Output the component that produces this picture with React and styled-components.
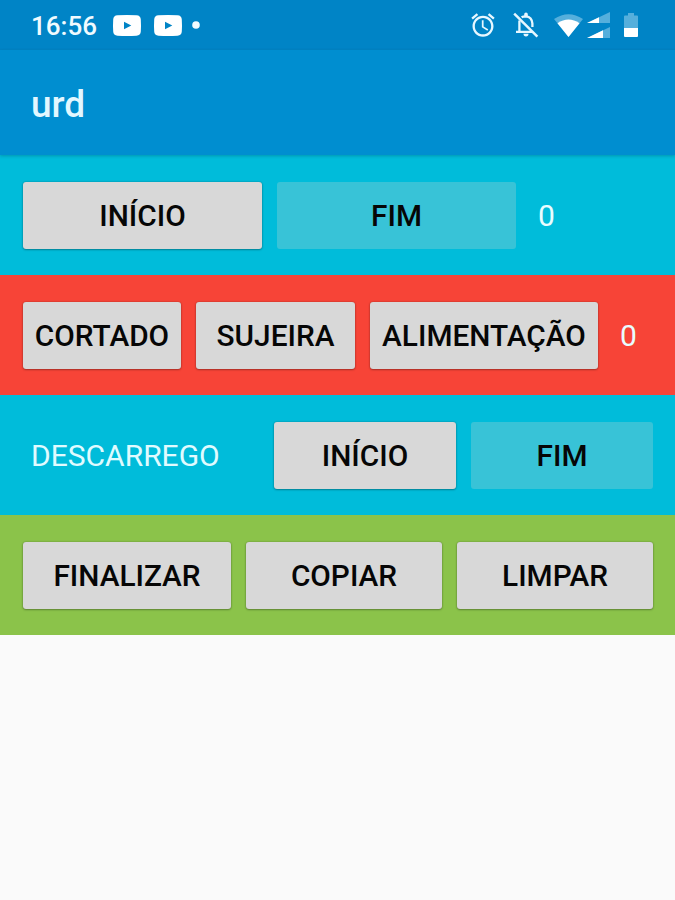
import React from 'react';
import styled, { createGlobalStyle } from 'styled-components';

const GlobalStyles = createGlobalStyle`
    *{
        box-sizing: border-box;
    }
    body{
        margin: 0;
        background-color: #fafafa;
        font-family: Roboto, "Liberation Sans", sans-serif;
    }
`
const Screen = styled.div`
    display: flex;
    flex-direction: column;
    min-height: 100vh;
    background-color: #fafafa;
`
const StatusBar = styled.div`
    height: 50px;
    padding: 0 37px 0 31px;
    display: flex;
    align-items: center;
    background-color: #0084c6;
`
const Clock = styled.span`
    width: 82px;
    padding-top: 1px;
    color: #f0fbff;
    font-size: 26px;
    line-height: 30px;
    font-weight: 500;
`
const StatusIcon = styled.svg`
    display: block;
    flex: none;
    width: ${({width}) => width}px;
    height: ${({height}) => height}px;
    margin-left: ${({$gap}) => $gap || 0}px;
    overflow: visible;
`
const Spacer = styled.div`
    flex: 1;
`
const AppBar = styled.header`
    height: 105px;
    padding: 4px 31px 0;
    display: flex;
    align-items: center;
    background-color: #008ed0;
    box-shadow: 0 1px 3px rgba(0, 60, 80, 0.3);
    position: relative;
    z-index: 1;
`
const Title = styled.h1`
    margin: 0;
    color: #e2f7ff;
    font-size: 37px;
    line-height: 44px;
    font-weight: 500;
`
const tones = {
    cyan : '#00bcda',
    red : '#f74437',
    green : '#8bc34a',
}
const Row = styled.section`
    height: 120px;
    padding: 0 22px 0 23px;
    display: flex;
    align-items: center;
    gap: 15px;
    background-color: ${({$tone}) => tones[$tone]};
`
const Button = styled.button`
    flex: ${({$width}) => $width ? `0 0 ${$width}px` : '1 1 0'};
    height: 67px;
    margin: 0;
    padding: 1px 0 0;
    border: 0;
    border-radius: 3px;
    background-color: #d8d8d8;
    box-shadow: 0 0 2px rgba(0, 0, 0, 0.3), 0 1px 2px rgba(0, 0, 0, 0.25);
    color: #060606;
    font-family: inherit;
    font-size: 29.8px;
    line-height: 36px;
    font-weight: 500;
    white-space: nowrap;
    &:disabled{
        background-color: #38c3d7;
        box-shadow: none;
    }
`
const Count = styled.span`
    padding: 1px 0 0 7px;
    color: #e9fdff;
    font-size: 30px;
    line-height: 36px;
`
const Label = styled.span`
    flex: 1;
    padding: 1px 0 0 8px;
    color: #e0fbff;
    font-size: 30px;
    line-height: 36px;
`

const VideoIcon = ({gap}) => (
    <StatusIcon width={28} height={21} $gap={gap} viewBox="0 0 28 21">
        <path fill="#fff" fillRule="evenodd" d="M4.5 0.3Q14-.3 23.5.3Q27.6.5 27.8 4.5Q28.2 10.5 27.8 16.5Q27.6 20.5 23.5 20.7Q14 21.3 4.5 20.7Q.4 20.5.2 16.5Q-.2 10.5.2 4.5Q.4.5 4.5.3ZM11 6.7V14.3L18.3 10.5Z"/>
    </StatusIcon>
)
const AlarmIcon = () => (
    <StatusIcon width={28} height={28} viewBox="0 0 24 24">
        <path fill="#e6f7ff" d="M22 5.72l-4.6-3.86-1.29 1.53 4.6 3.86L22 5.72zM7.88 3.39L6.6 1.86 2 5.71l1.29 1.53 4.59-3.85zM12.5 8H11v6l4.75 2.85.75-1.23-4-2.37V8zM12 4c-4.97 0-9 4.03-9 9s4.02 9 9 9c4.97 0 9-4.03 9-9s-4.03-9-9-9zm0 16c-3.87 0-7-3.13-7-7s3.13-7 7-7 7 3.13 7 7-3.13 7-7 7z"/>
    </StatusIcon>
)
const SilentIcon = () => (
    <StatusIcon width={26} height={26} $gap={16} viewBox="0 0 26 26">
        <g fill="none" stroke="#e6f7ff" strokeWidth="2.3">
            <path d="M8.6 5.2Q10 4.3 13 4.3Q19 5 19.4 11.5V15"/>
            <path d="M6.4 8.5V19.8M3 19.8H19"/>
            <path d="M1.2 1.6L24.4 24.6" strokeWidth="2.5"/>
        </g>
        <path fill="#e6f7ff" d="M11.2 4V2.3Q11.2.5 13 .5T14.8 2.3V4ZM10.5 21.7H15.5Q15.5 24.4 13 24.4T10.5 21.7Z"/>
    </StatusIcon>
)
const WifiIcon = () => (
    <StatusIcon width={29} height={23} $gap={15} viewBox="0 0 29 23">
        <path fill="#55afdc" d="M0 5Q14.5-4.5 29 5L14.5 23Z"/>
        <path fill="#fff" d="M3.5 9.3Q14.5 1.8 25.5 9.3L14.5 23Z"/>
    </StatusIcon>
)
const SignalIcon = () => (
    <StatusIcon width={23} height={26} $gap={4} viewBox="0 0 23 26">
        <path fill="#55afdc" d="M23 0V11H0ZM23 15V26H0Z"/>
        <path fill="#fff" d="M12 5.3V11H0ZM16 18.3V26H0Z"/>
    </StatusIcon>
)
const BatteryIcon = () => (
    <StatusIcon width={14} height={24} $gap={14} viewBox="0 0 14 24">
        <path fill="#55afdc" d="M4 0H10V2.5H13Q14 2.5 14 3.5V15H0V3.5Q0 2.5 1 2.5H4Z"/>
        <path fill="#fff" d="M0 15H14V23Q14 24 13 24H1Q0 24 0 23Z"/>
    </StatusIcon>
)

function App() {
    return (
        <Screen>
            <GlobalStyles/>
            <StatusBar>
                <Clock>16:56</Clock>
                <VideoIcon/>
                <VideoIcon gap={13}/>
                <StatusIcon width={8} height={8} $gap={10} viewBox="0 0 8 8">
                    <circle cx="4" cy="4" r="3.8" fill="#f2fbff"/>
                </StatusIcon>
                <Spacer/>
                <AlarmIcon/>
                <SilentIcon/>
                <WifiIcon/>
                <SignalIcon/>
                <BatteryIcon/>
            </StatusBar>
            <AppBar>
                <Title>urd</Title>
            </AppBar>
            <Row $tone="cyan">
                <Button $width={239}>INÍCIO</Button>
                <Button $width={239} disabled>FIM</Button>
                <Count>0</Count>
            </Row>
            <Row $tone="red">
                <Button $width={158}>CORTADO</Button>
                <Button $width={159}>SUJEIRA</Button>
                <Button $width={228}>ALIMENTAÇÃO</Button>
                <Count>0</Count>
            </Row>
            <Row $tone="cyan">
                <Label>DESCARREGO</Label>
                <Button $width={182}>INÍCIO</Button>
                <Button $width={182} disabled>FIM</Button>
            </Row>
            <Row $tone="green">
                <Button $width={208}>FINALIZAR</Button>
                <Button>COPIAR</Button>
                <Button>LIMPAR</Button>
            </Row>
        </Screen>
    )
}

export default App;
